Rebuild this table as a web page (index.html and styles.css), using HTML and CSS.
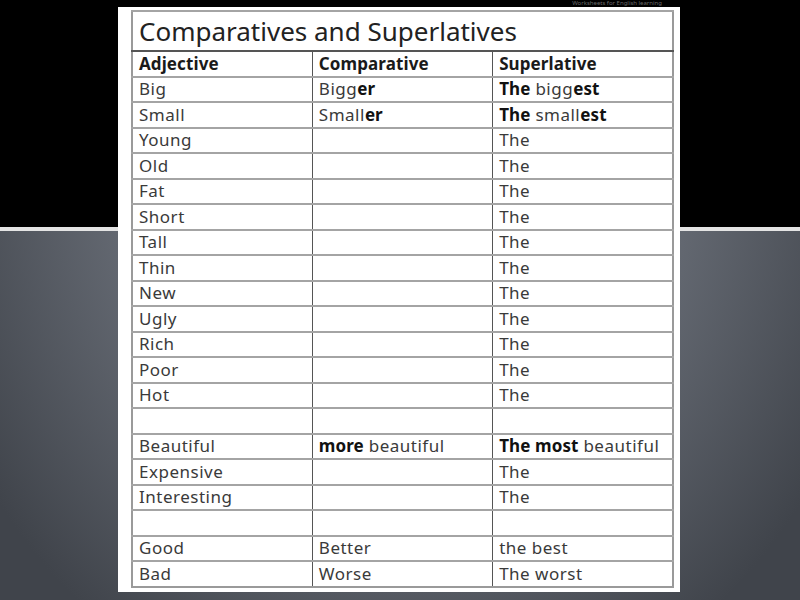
FILE: index.html
```html
<!DOCTYPE html>
<html lang="en">
<head>
<meta charset="utf-8">
<title>Comparatives and Superlatives</title>
<link rel="stylesheet" href="styles.css">
</head>
<body>
<div class="page">
  <div class="topnote">Worksheets for English learning</div>
  <div class="sheet">
    <table class="grid">
      <tr class="title-row"><td colspan="3" class="title">Comparatives and Superlatives</td></tr>
      <tr class="head"><td>Adjective</td><td>Comparative</td><td>Superlative</td></tr>
      <tr><td>Big</td><td>Bigg<b>er</b></td><td><b>The</b> bigg<b>est</b></td></tr>
      <tr><td>Small</td><td>Small<b>er</b></td><td><b>The</b> small<b>est</b></td></tr>
      <tr><td>Young</td><td></td><td>The</td></tr>
      <tr><td>Old</td><td></td><td>The</td></tr>
      <tr><td>Fat</td><td></td><td>The</td></tr>
      <tr><td>Short</td><td></td><td>The</td></tr>
      <tr><td>Tall</td><td></td><td>The</td></tr>
      <tr><td>Thin</td><td></td><td>The</td></tr>
      <tr><td>New</td><td></td><td>The</td></tr>
      <tr><td>Ugly</td><td></td><td>The</td></tr>
      <tr><td>Rich</td><td></td><td>The</td></tr>
      <tr><td>Poor</td><td></td><td>The</td></tr>
      <tr><td>Hot</td><td></td><td>The</td></tr>
      <tr><td></td><td></td><td></td></tr>
      <tr><td>Beautiful</td><td><b>more</b> beautiful</td><td><b>The most</b> beautiful</td></tr>
      <tr><td>Expensive</td><td></td><td>The</td></tr>
      <tr><td>Interesting</td><td></td><td>The</td></tr>
      <tr><td></td><td></td><td></td></tr>
      <tr><td>Good</td><td>Better</td><td>the best</td></tr>
      <tr><td>Bad</td><td>Worse</td><td>The worst</td></tr>
    </table>
  </div>
</div>
</body>
</html>
```

FILE: styles.css
```css
html, body {
  margin: 0;
  padding: 0;
  width: 800px;
  height: 600px;
  overflow: hidden;
}

body {
  background:
    linear-gradient(to bottom, #000 0, #000 227px, #e4e4e4 227px, #e4e4e4 231px, transparent 231px),
    radial-gradient(ellipse 62% 95% at 50% 28%, #7d828c 0%, #656a73 55%, #40444b 100%);
  font-family: "Noto Sans", "DejaVu Sans", sans-serif;
}

.page {
  padding-left: 118px;
}

.topnote {
  width: 562px;
  height: 7px;
  box-sizing: border-box;
  padding-right: 18px;
  text-align: right;
  font-size: 6px;
  line-height: 7px;
  color: #6a6a6a;
}

.sheet {
  width: 562px;
  height: 585px;
  box-sizing: border-box;
  background: #fff;
  padding: 3px 6px 6px 13px;
}

.grid {
  width: 543px;
  table-layout: fixed;
  border-collapse: collapse;
  border: 2px solid #9a9a9a;
}

.grid td {
  height: 23.5px;
  padding: 0 0 0 6px;
  border-top: 2px solid #a4a4a4;
  border-left: 1px solid #555;
  border-right: 1px solid #555;
  font-size: 17px;
  letter-spacing: 0.5px;
  line-height: 20px;
  color: #3a3a3a;
  white-space: nowrap;
  vertical-align: middle;
}

.grid td b {
  color: #111;
  font-weight: 700;
  letter-spacing: 0.1px;
}

.grid .title-row .title {
  height: 38px;
  border-bottom: 2px solid #555;
  font-size: 26px;
  letter-spacing: 0;
  color: #222;
  padding-left: 6px;
}

.grid .head td {
  font-weight: 700;
  letter-spacing: 0.1px;
  color: #1a1a1a;
}
```
